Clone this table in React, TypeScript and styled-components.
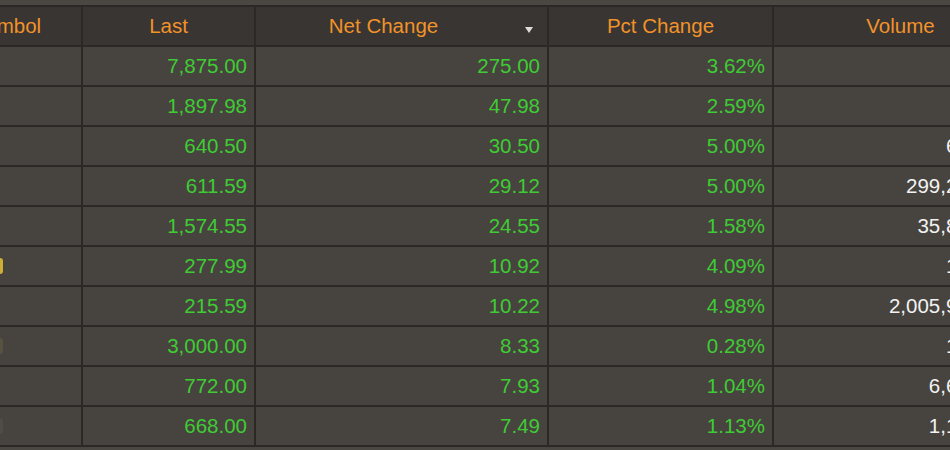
import React from "react";
import styled, { createGlobalStyle } from "styled-components";

const Global = createGlobalStyle`
  html, body {
    margin: 0;
    padding: 0;
    background: #4a4642;
    overflow: hidden;
    width: 950px;
    height: 450px;
  }
  body {
    font-family: "Liberation Sans", Arial, sans-serif;
  }
`;

const Page = styled.div`
  padding-top: 5px;
  width: 950px;
  height: 450px;
  overflow: hidden;
  box-sizing: border-box;
`;

const Grid = styled.div`
  display: grid;
  grid-template-columns: 148px 171px 291px 223px 253px;
  grid-auto-rows: 38px;
  gap: 2px;
  padding: 2px 0;
  margin-left: -67px;
  width: max-content;
  background: #2b2826;
`;

const HeaderCell = styled.div<{ $sorted?: boolean }>`
  position: relative;
  background: #383532;
  color: #f2922a;
  font-size: 20.5px;
  display: flex;
  align-items: center;
  justify-content: center;
  padding-right: ${(p) => (p.$sorted ? "36px" : "0")};
  box-sizing: border-box;
  white-space: nowrap;
`;

const SortArrow = styled.span`
  position: absolute;
  right: 14px;
  top: 20px;
  width: 0;
  height: 0;
  border-left: 4px solid transparent;
  border-right: 4px solid transparent;
  border-top: 6px solid #dcdcdc;
`;

const Cell = styled.div<{ $tone: "green" | "white" }>`
  background: #47433f;
  color: ${(p) => (p.$tone === "green" ? "#3fcb34" : "#f2f2f2")};
  font-size: 20.5px;
  display: flex;
  align-items: center;
  justify-content: flex-end;
  padding-right: 7px;
  box-sizing: border-box;
  white-space: nowrap;
`;

const SymbolCell = styled.div`
  background: #47433f;
  color: #e8e8e8;
  font-size: 20.5px;
  display: flex;
  align-items: center;
  padding-left: 7px;
  box-sizing: border-box;
  white-space: nowrap;
  overflow: hidden;
`;

const SymbolName = styled.span`
  display: inline-block;
  width: 50px;
  overflow: hidden;
  color: #ddd;
`;

const Marker = styled.span<{ $tone: "yellow" | "dim" | "faint" }>`
  display: inline-block;
  width: 11px;
  height: 16px;
  margin-left: 2px;
  border-radius: 3px;
  background: ${(p) =>
    p.$tone === "yellow" ? "#cfae35" : p.$tone === "dim" ? "#575240" : "#4f4b46"};
`;

type Row = {
  sym: string;
  marker?: "yellow" | "dim" | "faint";
  last: string;
  net: string;
  pct: string;
  vol: string;
};

const rows: Row[] = [
  { sym: "BA", last: "7,875.00", net: "275.00", pct: "3.62%", vol: "12,540" },
  { sym: "GS", last: "1,897.98", net: "47.98", pct: "2.59%", vol: "45,210" },
  { sym: "MA", last: "640.50", net: "30.50", pct: "5.00%", vol: "612,450" },
  { sym: "HD", last: "611.59", net: "29.12", pct: "5.00%", vol: "299,215,400" },
  { sym: "CAT", last: "1,574.55", net: "24.55", pct: "1.58%", vol: "35,812,600" },
  { sym: "MMM", marker: "yellow", last: "277.99", net: "10.92", pct: "4.09%", vol: "145,300" },
  { sym: "IBM", last: "215.59", net: "10.22", pct: "4.98%", vol: "2,005,912,345" },
  { sym: "JPM", marker: "dim", last: "3,000.00", net: "8.33", pct: "0.28%", vol: "120,000" },
  { sym: "UNH", last: "772.00", net: "7.93", pct: "1.04%", vol: "6,612,300" },
  { sym: "CVX", marker: "faint", last: "668.00", net: "7.49", pct: "1.13%", vol: "1,145,800" },
];

export default function App() {
  return (
    <>
      <Global />
      <Page>
        <Grid>
          <HeaderCell>Symbol</HeaderCell>
          <HeaderCell>Last</HeaderCell>
          <HeaderCell $sorted>
            Net Change
            <SortArrow />
          </HeaderCell>
          <HeaderCell>Pct Change</HeaderCell>
          <HeaderCell>Volume</HeaderCell>
          {rows.map((r) => (
            <React.Fragment key={r.sym}>
              <SymbolCell>
                <SymbolName>{r.sym}</SymbolName>
                {r.marker && <Marker $tone={r.marker} />}
              </SymbolCell>
              <Cell $tone="green">{r.last}</Cell>
              <Cell $tone="green">{r.net}</Cell>
              <Cell $tone="green">{r.pct}</Cell>
              <Cell $tone="white">{r.vol}</Cell>
            </React.Fragment>
          ))}
        </Grid>
      </Page>
    </>
  );
}
